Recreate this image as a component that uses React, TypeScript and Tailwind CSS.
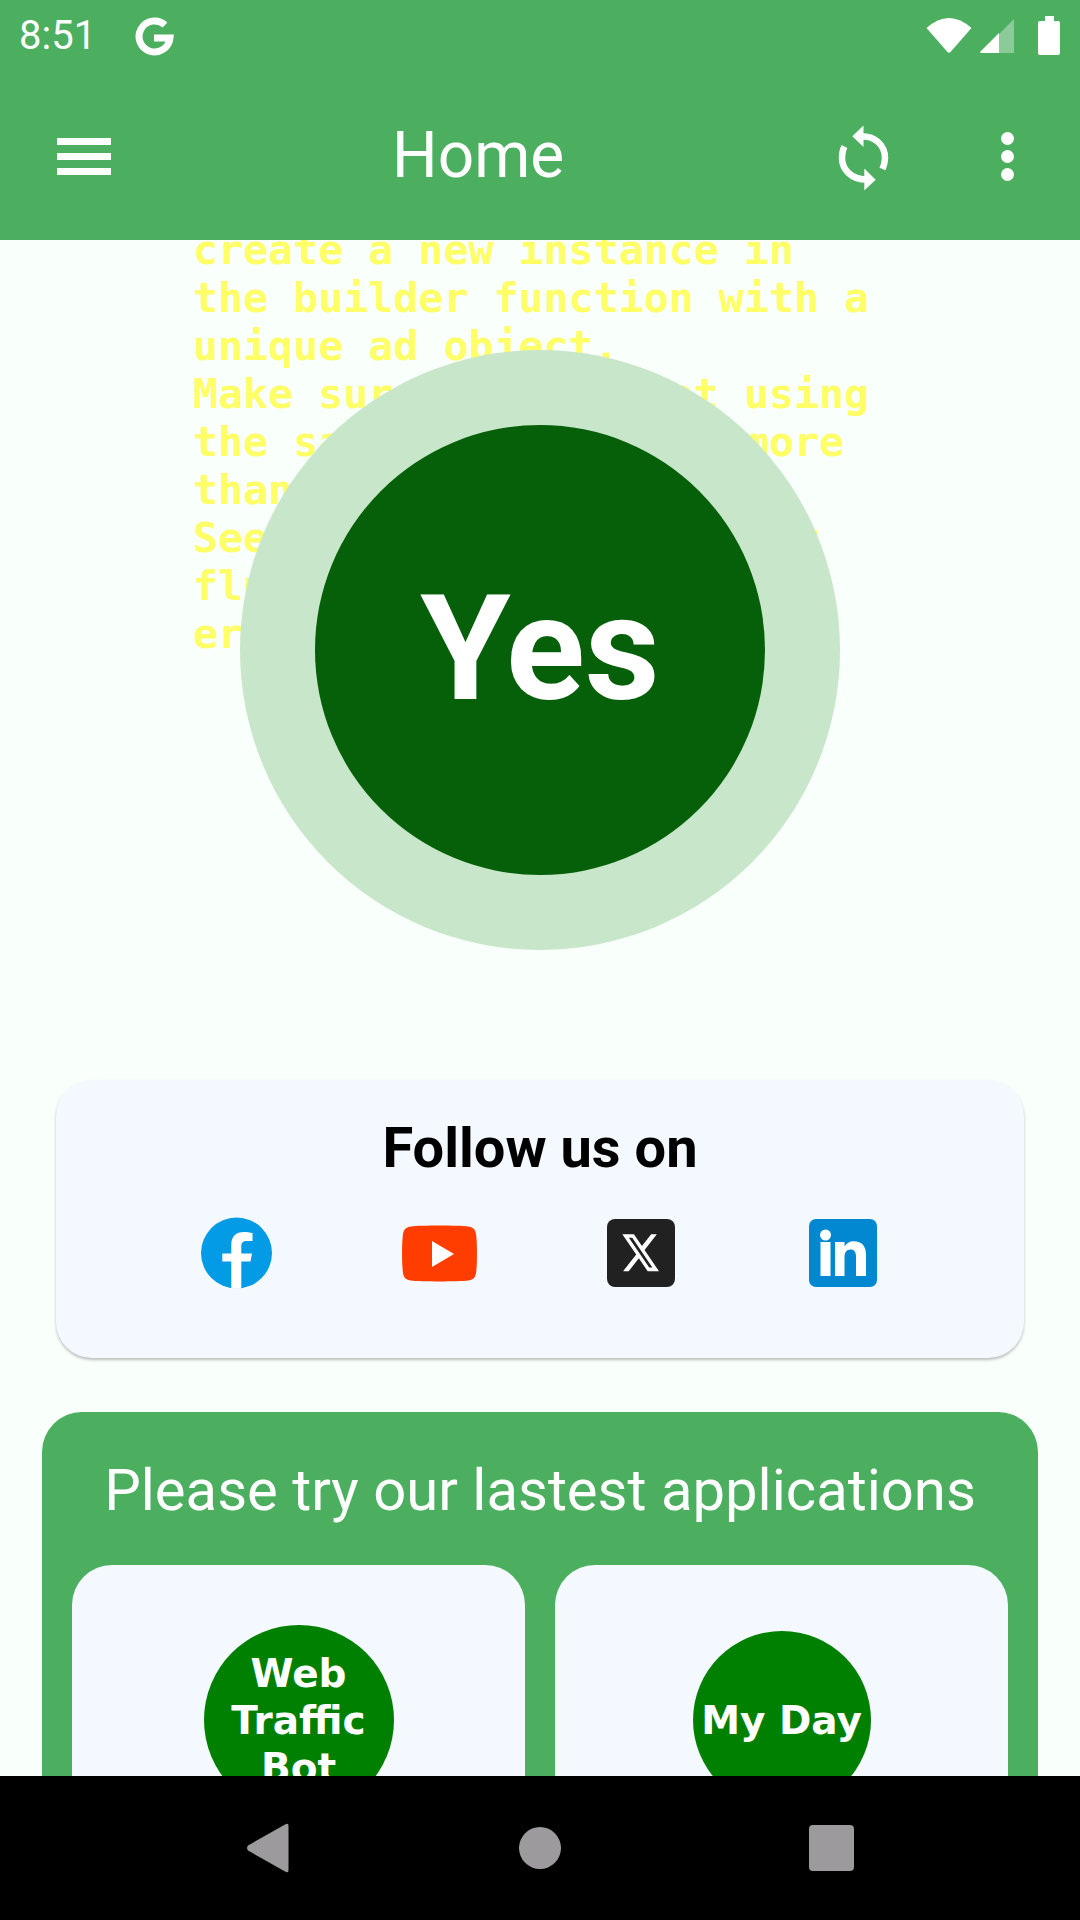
import React from 'react';

const errorLines = [
  'create a new instance in',
  'the builder function with a',
  'unique ad object.',
  'Make sure you are not using',
  'the same ad object in more',
  'than one AdWidget.',
  'See the documentation for',
  'flutter ads to avoid this',
  'error.',
];

const StatusIcons = () => (
  <svg width="136" height="42" viewBox="926 15 136 42" fill="white">
    <path d="M926.5 28 Q949 8 971.5 28 L950.5 52 Q949 53.5 947.5 52 Z" />
    <path d="M980 53 L1014 19 V53 Z" opacity="0.35" />
    <path d="M981 53 Q979.5 52.5 980.5 51.5 L999 33 V53 Z" />
    <path d="M1045 16 H1054 V21 H1058 Q1060 21 1060 23 V53 Q1060 55 1058 55 H1040 Q1038 55 1038 53 V23 Q1038 21 1040 21 H1045 Z" />
  </svg>
);

const SyncIcon = () => (
  <svg width="60" height="72" viewBox="15 18 60 72" fill="none" stroke="white" strokeWidth="6.5">
    <path d="M42 34.5 C53 33.5 65 42 65 56 C65 60 64 63.5 62.5 67" />
    <path d="M24.5 44.5 C22.5 48 22 52 22 56 C22 68 32 77.5 46 77.5" />
    <path d="M43.5 23.5 L32.3 34.3 L43.5 45 Z" fill="white" stroke="none" />
    <path d="M44.3 66.5 L55.7 77.7 L44.3 88.5 Z" fill="white" stroke="none" />
  </svg>
);

const FacebookIcon = () => (
  <svg width="72" height="72" viewBox="12 12 72 72">
    <circle cx="47.5" cy="48" r="35.5" fill="#039be5" />
    <path
      fill="white"
      d="M42.3 83.5 V56.5 H33.3 V48.5 H42.3 V40 C42.3 31 47 27 55 27 C58 27 61 27.5 63.5 28 V36 H58 C54 36 52.3 37.5 52.3 41 V48.5 H63 L61.5 56.5 H52.3 V83.5 Q47 84 42.3 83.5 Z"
    />
  </svg>
);

const YoutubeIcon = () => (
  <svg width="75" height="57" viewBox="0 0 75 57">
    <path
      fill="#ff3d00"
      d="M9 1.5 C18 0.3 57 0.3 66 1.5 C71 2.2 73.3 4.5 74 9 C75.3 18 75.3 39 74 48 C73.3 52.5 71 54.8 66 55.5 C57 56.7 18 56.7 9 55.5 C4 54.8 1.7 52.5 1 48 C-0.3 39 -0.3 18 1 9 C1.7 4.5 4 2.2 9 1.5 Z"
    />
    <path fill="white" d="M30 16 L52 29 L30 42 Z" />
  </svg>
);

const XIcon = () => (
  <svg width="68" height="68" viewBox="0 0 68 68">
    <rect width="68" height="68" rx="8" fill="#212121" />
    <path
      transform="translate(13.2 11) scale(1.7 1.9)"
      fill="white"
      fillRule="evenodd"
      d="M18.244 2.25h3.308l-7.227 8.26 8.502 11.24H16.17l-5.214-6.817L4.99 21.75H1.68l7.73-8.835L1.254 2.25H8.08l4.713 6.231zm-1.161 17.52h1.833L7.084 4.126H5.117z"
    />
  </svg>
);

const LinkedinIcon = () => (
  <svg width="68" height="68" viewBox="0 0 68 68">
    <rect width="68" height="68" rx="7" fill="#0288d1" />
    <circle cx="16.5" cy="16" r="5.5" fill="white" />
    <rect x="11.5" y="23" width="10" height="34" fill="white" />
    <path
      fill="white"
      d="M26 23h9.5v4.5c1.8-3.3 5-5.3 9-5.3 8.5 0 12.5 5 12.5 13.5V57h-10V38c0-5-1.5-7.5-5.5-7.5s-6 3-6 7.5v19h-9.5z"
    />
  </svg>
);

export default function App() {
  return (
    <div className="w-[1080px] h-[1920px] flex flex-col overflow-hidden bg-[#f9fffa] font-['Roboto',sans-serif]">
      {/* Status bar */}
      <div className="h-[72px] shrink-0 bg-[#4caf60] flex items-center pl-[19px] pr-[18px] text-white">
        <span className="text-[40px] leading-none">8:51</span>
        <svg className="ml-[39px]" width="40" height="40" viewBox="0 0 40 40" fill="none" stroke="white" strokeWidth="7">
          <path d="M30 9 A 15.5 15.5 0 1 0 35 22 H 19" />
        </svg>
        <div className="ml-auto">
          <StatusIcons />
        </div>
      </div>

      {/* Toolbar */}
      <div className="h-[168px] shrink-0 bg-[#4caf60] flex items-center pl-[57px] text-white">
        <div className="w-[54px] flex flex-col gap-[8px]">
          <div className="h-[7px] bg-white" />
          <div className="h-[7px] bg-white" />
          <div className="h-[7px] bg-white" />
        </div>
        <h1 className="ml-[281px] w-[180px] text-[64px] leading-none font-normal">Home</h1>
        <div className="ml-[263px]">
          <SyncIcon />
        </div>
        <div className="ml-[106px] flex flex-col gap-[5px]">
          <div className="w-[13px] h-[13px] rounded-full bg-white" />
          <div className="w-[13px] h-[13px] rounded-full bg-white" />
          <div className="w-[13px] h-[13px] rounded-full bg-white" />
        </div>
      </div>

      {/* Content */}
      <div className="flex-1 overflow-hidden">
        <div className="relative h-[840px] overflow-hidden">
          <div className="pl-[193px] -mt-[14px] font-['DejaVu_Sans_Mono',monospace] font-bold text-[41.6px] leading-[48px] text-[#ffff66] whitespace-pre">
            {errorLines.map((line) => (
              <div key={line}>{line}</div>
            ))}
          </div>
          <div className="absolute left-[240px] top-[110px] w-[600px] h-[600px] rounded-full bg-[#c8e6c9] flex items-center justify-center">
            <div className="w-[450px] h-[450px] rounded-full bg-[#065f09] flex items-center justify-center">
              <span className="text-white font-bold text-[146px] leading-none">Yes</span>
            </div>
          </div>
        </div>

        <div className="mx-[56px] h-[278px] rounded-[36px] bg-[#f4f9ff] shadow-[0_2px_3px_rgba(0,0,0,0.25)] pt-[36px] flex flex-col items-center">
          <div className="text-[56px] leading-[64px] font-bold text-black">Follow us on</div>
          <div className="mt-[37px] flex justify-center">
            <div className="w-[202px] h-[72px] flex items-center justify-center"><FacebookIcon /></div>
            <div className="w-[202px] h-[72px] flex items-center justify-center"><YoutubeIcon /></div>
            <div className="w-[202px] h-[72px] flex items-center justify-center"><XIcon /></div>
            <div className="w-[202px] h-[72px] flex items-center justify-center"><LinkedinIcon /></div>
          </div>
        </div>

        <div className="mt-[54px] mx-[42px] rounded-[40px] bg-[#4caf60] px-[30px] pt-[44px] pb-[30px]">
          <div className="text-center text-white text-[58px] leading-[68px] whitespace-nowrap">Please try our lastest applications</div>
          <div className="mt-[41px] grid grid-cols-2 gap-[30px]">
            <div className="h-[310px] rounded-[40px] bg-[#f4f9ff] flex items-center justify-center">
              <div className="w-[190px] h-[190px] rounded-full bg-[#008000] flex items-center justify-center text-center text-white font-['DejaVu_Sans',sans-serif] font-bold text-[39px] leading-[47px]">
                Web Traffic Bot
              </div>
            </div>
            <div className="h-[310px] rounded-[40px] bg-[#f4f9ff] flex items-center justify-center">
              <div className="w-[178px] h-[178px] rounded-full bg-[#008000] flex items-center justify-center text-center text-white font-['DejaVu_Sans',sans-serif] font-bold text-[39px] leading-[47px] whitespace-nowrap">
                My Day
              </div>
            </div>
          </div>
        </div>
      </div>

      {/* Navigation bar */}
      <div className="relative h-[144px] shrink-0 bg-black flex items-center">
        <svg className="ml-[246px]" width="44" height="50" viewBox="0 0 44 50" fill="#9c9a9c">
          <path d="M40 1 Q42.500 0 42.500 3 V47 Q42.500 50 40 49 L2 27.500 Q0 25 2 22.500 Z" />
        </svg>
        <div className="ml-[229px] w-[42px] h-[42px] rounded-full bg-[#9c9a9c]" />
        <div className="ml-[248px] w-[45px] h-[46px] rounded-[4px] bg-[#9c9a9c]" />
      </div>
    </div>
  );
}
